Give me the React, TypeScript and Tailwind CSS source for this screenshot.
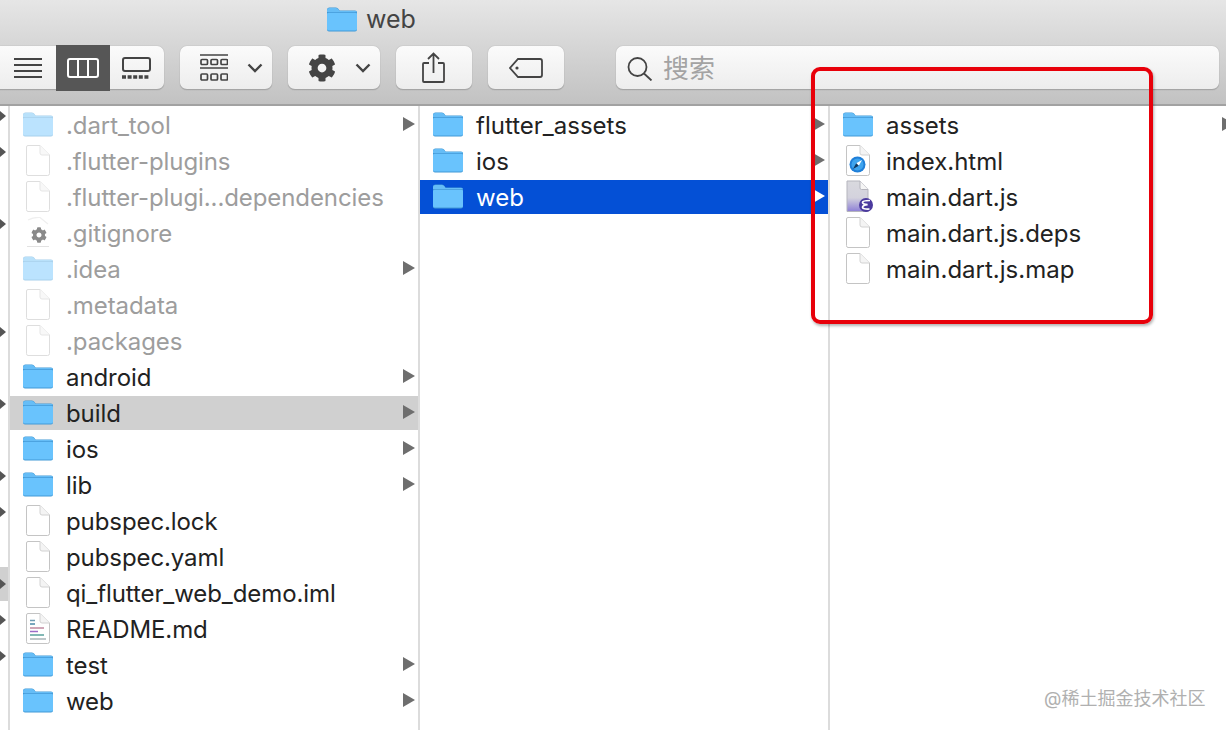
import React from "react";
import { FaCog } from "react-icons/fa";

const font = "font-['Inter','Liberation_Sans','Noto_Sans_CJK_SC',sans-serif]";

function Folder({ dim }: { dim?: boolean }) {
  return (
    <svg width="30" height="25" viewBox="0 0 30 25" className={dim ? "opacity-45" : ""}>
      <path d="M0 3 Q0 0.5 2.5 0.5 H9 Q10.5 0.5 11.5 2 L12.5 3.5 H28 Q30 3.5 30 5.5 V22.5 Q30 24.5 28 24.5 H2 Q0 24.5 0 22.5 Z" fill="#4399d6" />
      <path d="M0 3 Q0 1 2.5 1 H9 Q10.5 1 11.5 2.5 L12.5 4 H28 Q29.5 4 30 5 H0 Z" fill="#66bdf6" />
      <path d="M0 6.5 Q0 5.8 2 5.8 H28 Q30 5.8 30 6.5 V22 Q30 23.5 28 23.5 H2 Q0 23.5 0 22 Z" fill="#69c3fd" />
    </svg>
  );
}

function Page({ dim, children }: { dim?: boolean; children?: React.ReactNode }) {
  return (
    <svg width="24" height="31" viewBox="0 0 24 31" className={dim ? "opacity-55" : ""}>
      <path d="M0.5 2 Q0.5 0.5 2 0.5 H14 L23.5 10 V28.5 Q23.5 30.5 21.5 30.5 H2 Q0.5 30.5 0.5 28.5 Z" fill="#ffffff" stroke="#c4c4c4" />
      <path d="M14 0.5 V8 Q14 10 16 10 H23.5" fill="#f4f4f4" stroke="#d2d2d2" />
      {children}
    </svg>
  );
}

function GearFile() {
  return (
    <svg width="24" height="31" viewBox="0 0 24 31">
      <path d="M2 3 Q8 0 14 0.5 L22 7" fill="none" stroke="#efefef" strokeWidth="1.2" />
      <FaCog x="5" y="10" width="15" height="15" color="#8a8a8a" />
      <path d="M1 29.5 H23" stroke="#e2e2e2" />
    </svg>
  );
}

function Safari() {
  return (
    <Page>
      <circle cx="11.5" cy="19.5" r="8" fill="#1f7fd8" />
      <circle cx="11.5" cy="19.5" r="6" fill="#3ea4ee" />
      <path d="M16 15 L12.8 20.8 L10.2 18.2 Z" fill="#ffffff" />
      <path d="M7 24 L10.2 18.2 L12.8 20.8 Z" fill="#11385f" />
    </Page>
  );
}

function Emacs() {
  return (
    <svg width="30" height="33" viewBox="0 0 30 33">
      <defs>
        <linearGradient id="emacsPage" x1="0" y1="0" x2="0" y2="1">
          <stop offset="0" stopColor="#d9d9de" />
          <stop offset="0.55" stopColor="#d3d2dd" />
          <stop offset="1" stopColor="#8d7fd6" />
        </linearGradient>
      </defs>
      <path d="M4 1 H17 L25 9.5 V31.5 H4 Z" fill="url(#emacsPage)" stroke="#b5b5bd" />
      <path d="M17 1 V8 Q17 9.5 18.5 9.5 H25" fill="#f5f5f5" stroke="#b5b5bd" />
      <circle cx="23" cy="25" r="7" fill="#4b3a9e" />
      <path d="M27 20.5 Q19.5 20.5 19.5 22.5 Q19.5 24 24.5 24.7 Q19.5 25.5 19.5 27.3 Q19.5 29.3 26.5 29" fill="none" stroke="#ffffff" strokeWidth="1.7" />
    </svg>
  );
}

function Readme() {
  return (
    <Page>
      <path d="M4 7.5h5" stroke="#6e9cb4" strokeWidth="1.5" />
      <path d="M4 11h5" stroke="#4b8aa8" strokeWidth="1.5" />
      <path d="M4 15h14" stroke="#c08aa0" strokeWidth="1.5" />
      <path d="M4 18.5h8" stroke="#9c6cc8" strokeWidth="1.5" />
      <path d="M4 22h14" stroke="#58a09c" strokeWidth="1.5" />
      <path d="M4 26h16" stroke="#a9b4b8" strokeWidth="1.5" />
    </Page>
  );
}

type Kind = "folder" | "page" | "gear" | "safari" | "emacs" | "readme";
type Item = { name: string; kind: Kind; dim?: boolean; arrow?: boolean; sel?: "gray" | "blue" };

const col1: Item[] = [
  { name: ".dart_tool", kind: "folder", dim: true, arrow: true },
  { name: ".flutter-plugins", kind: "page", dim: true },
  { name: ".flutter-plugi...dependencies", kind: "page", dim: true },
  { name: ".gitignore", kind: "gear", dim: true },
  { name: ".idea", kind: "folder", dim: true, arrow: true },
  { name: ".metadata", kind: "page", dim: true },
  { name: ".packages", kind: "page", dim: true },
  { name: "android", kind: "folder", arrow: true },
  { name: "build", kind: "folder", arrow: true, sel: "gray" },
  { name: "ios", kind: "folder", arrow: true },
  { name: "lib", kind: "folder", arrow: true },
  { name: "pubspec.lock", kind: "page" },
  { name: "pubspec.yaml", kind: "page" },
  { name: "qi_flutter_web_demo.iml", kind: "page" },
  { name: "README.md", kind: "readme" },
  { name: "test", kind: "folder", arrow: true },
  { name: "web", kind: "folder", arrow: true },
];
const col2: Item[] = [
  { name: "flutter_assets", kind: "folder", arrow: true },
  { name: "ios", kind: "folder", arrow: true },
  { name: "web", kind: "folder", arrow: true, sel: "blue" },
];
const col3: Item[] = [
  { name: "assets", kind: "folder" },
  { name: "index.html", kind: "safari" },
  { name: "main.dart.js", kind: "emacs" },
  { name: "main.dart.js.deps", kind: "page" },
  { name: "main.dart.js.map", kind: "page" },
];

function Icon({ item }: { item: Item }) {
  switch (item.kind) {
    case "folder":
      return <Folder dim={item.dim} />;
    case "page":
      return <Page dim={item.dim} />;
    case "gear":
      return <GearFile />;
    case "safari":
      return <Safari />;
    case "emacs":
      return <Emacs />;
    default:
      return <Readme />;
  }
}

function Arrow({ white }: { white?: boolean }) {
  return (
    <svg width="12" height="14" viewBox="0 0 12 14">
      <path d="M0 0 L12 7 L0 14 Z" fill={white ? "#ffffff" : "#6e6e6e"} />
    </svg>
  );
}

function Row({ item, tight }: { item: Item; tight?: boolean }) {
  const bg = item.sel === "gray" ? "bg-[#d0d0d0]" : item.sel === "blue" ? "bg-[#0450d6]" : "";
  const color = item.sel === "blue" ? "text-white" : item.dim ? "text-[#9d9d9d]" : "text-[#222222]";
  return (
    <div className="h-9">
      <div className={`flex h-[34px] items-center ${bg}`}>
        <div className="mb-[2px] ml-[13px] flex w-[30px] items-center justify-center">
          <Icon item={item} />
        </div>
        <span
          className={`ml-[13px] flex-1 whitespace-nowrap pt-[2px] text-[24px] leading-[34px] ${tight ? "tracking-[-0.09px]" : ""} ${color}`}
        >
          {item.name}
        </span>
        {item.arrow && (
          <div className="mb-[2px] mr-[3px] flex items-center">
            <Arrow white={item.sel === "blue"} />
          </div>
        )}
      </div>
    </div>
  );
}

function Column({ items, className, tight }: { items: Item[]; className: string; tight?: boolean }) {
  return (
    <div className={`border-r-2 border-[#dcdcdc] pt-[2px] ${className}`}>
      {items.map((it) => (
        <Row key={it.name} item={it} tight={tight} />
      ))}
    </div>
  );
}

const btn =
  "flex h-[44px] items-center rounded-[7px] border-b border-b-[#a5a5a5] bg-gradient-to-b from-[#fbfbfb] to-[#ededed] shadow-[0_0_1px_rgba(0,0,0,0.35)]";

function Chevron() {
  return (
    <svg width="16" height="10" viewBox="0 0 16 10">
      <path d="M1.5 1.5 L8 8 L14.5 1.5" fill="none" stroke="#444" strokeWidth="2.4" />
    </svg>
  );
}

function Toolbar() {
  return (
    <div className="flex items-start pt-[8px]">
      <div className={`${btn} w-[164px] rounded-l-none`}>
        <div className="flex h-full w-[56px] items-center justify-center">
          <svg width="28" height="20" viewBox="0 0 28 20" stroke="#444" strokeWidth="2">
            <path d="M0 1h28M0 7h28M0 13h28M0 19h28" />
          </svg>
        </div>
        <div className="flex h-[46px] w-[54px] items-center justify-center bg-[#565656]">
          <svg width="32" height="20" viewBox="0 0 32 20" fill="none" stroke="#fff" strokeWidth="2">
            <rect x="1" y="1" width="30" height="18" rx="2" />
            <path d="M11 1v18M21 1v18" />
          </svg>
        </div>
        <div className="flex h-full w-[54px] items-center justify-center">
          <svg width="30" height="22" viewBox="0 0 30 22" fill="none" stroke="#444">
            <rect x="1" y="1" width="27" height="13" rx="2" strokeWidth="2" />
            <path d="M0 20h28" strokeWidth="3.5" strokeDasharray="4 1.6" />
          </svg>
        </div>
      </div>
      <div className={`${btn} ml-4 w-[92px]`}>
        <svg className="ml-[20px]" width="28" height="27" viewBox="0 0 28 27" fill="none" stroke="#444">
          <path d="M0 1h28M0 14h28" strokeWidth="1.6" />
          <g strokeWidth="1.7">
            <rect x="1" y="5.5" width="6.5" height="5" rx="1" />
            <rect x="11" y="5.5" width="6.5" height="5" rx="1" />
            <rect x="21" y="5.5" width="6.5" height="5" rx="1" />
            <rect x="1" y="20" width="6.5" height="6" rx="1" />
            <rect x="11" y="20" width="6.5" height="6" rx="1" />
            <rect x="21" y="20" width="6.5" height="6" rx="1" />
          </g>
        </svg>
        <div className="ml-[19px] flex">
          <Chevron />
        </div>
      </div>
      <div className={`${btn} ml-4 w-[92px]`}>
        <div className="ml-[20px] flex text-[#444]">
          <FaCog size={28} />
        </div>
        <div className="ml-[19px] flex">
          <Chevron />
        </div>
      </div>
      <div className={`${btn} ml-4 w-[76px] justify-center`}>
        <svg width="24" height="31" viewBox="0 0 24 31" fill="none" stroke="#444" strokeWidth="1.8">
          <path d="M7 11H2a1 1 0 0 0-1 1v17a1 1 0 0 0 1 1h19a1 1 0 0 0 1-1V12a1 1 0 0 0-1-1h-5" />
          <path d="M11.5 21V2M6 7l5.5-5.5L17 7" />
        </svg>
      </div>
      <div className={`${btn} ml-4 w-[76px] justify-center`}>
        <svg width="34" height="20" viewBox="0 0 34 20" fill="none" stroke="#444" strokeWidth="1.8">
          <path d="M9 1h22a2 2 0 0 1 2 2v14a2 2 0 0 1-2 2H9L1 10Z" />
          <circle cx="8" cy="10" r="1.6" fill="#444" stroke="none" />
        </svg>
      </div>
      <div className={`${btn} ml-[52px] w-[603px]`}>
        <svg className="ml-[11px] mt-[2px]" width="26" height="24" viewBox="0 0 26 24" fill="none" stroke="#444" strokeWidth="1.8">
          <circle cx="10.5" cy="10" r="9" />
          <path d="M17 16.5l7.5 7" />
        </svg>
        <span className="ml-[10px] mt-[2px] text-[26px] leading-none text-[#a3a3a3]">搜索</span>
      </div>
    </div>
  );
}

const stripArrows = [true, true, false, true, false, false, true, false, true, false, true, true, false, true, true, true, false];

export default function App() {
  return (
    <div className={`relative h-[730px] w-[1226px] overflow-hidden bg-white ${font}`}>
      <div className="relative z-10 h-[106px] border-b-2 border-[#a2a2a2] bg-gradient-to-b from-[#e6e6e6] to-[#c2c2c2]">
        <div className="flex h-[38px] items-center pl-[327px]">
          <Folder />
          <span className="ml-[9px] text-[25px] leading-none text-[#444444]">web</span>
        </div>
        <Toolbar />
      </div>
      <div className="flex h-[624px]">
        <div className="w-[10px] border-r-2 border-[#dcdcdc]">
          <div className="-mt-[9px]">
            {stripArrows.map((on, i) => (
              <div key={i} className="h-9 pt-[2px]">
                <div className={`flex h-[34px] items-center ${i === 13 ? "bg-[#d0d0d0]" : ""}`}>
                  {on && (
                    <svg width="6" height="10" viewBox="0 0 6 10">
                      <path d="M0 0 L6 5 L0 10 Z" fill="#555" />
                    </svg>
                  )}
                </div>
              </div>
            ))}
          </div>
        </div>
        <Column items={col1} className="w-[410px]" tight />
        <Column items={col2} className="w-[410px]" />
        <div className="flex-1 pt-[2px]">
          {col3.map((it) => (
            <Row key={it.name} item={it} />
          ))}
        </div>
      </div>
      <div className="absolute left-[811px] top-[67px] z-20 h-[257px] w-[342px] rounded-[9px] border-[4px] border-[#e8000a] shadow-[1px_2px_3px_rgba(0,0,0,0.3)]" />
      <div className="absolute left-[1222px] top-[117px] flex">
        <Arrow />
      </div>
      <span className="absolute left-[1044px] top-[688px] text-[18px] leading-[22px] text-[#b0b0b0]">@稀土掘金技术社区</span>
    </div>
  );
}
